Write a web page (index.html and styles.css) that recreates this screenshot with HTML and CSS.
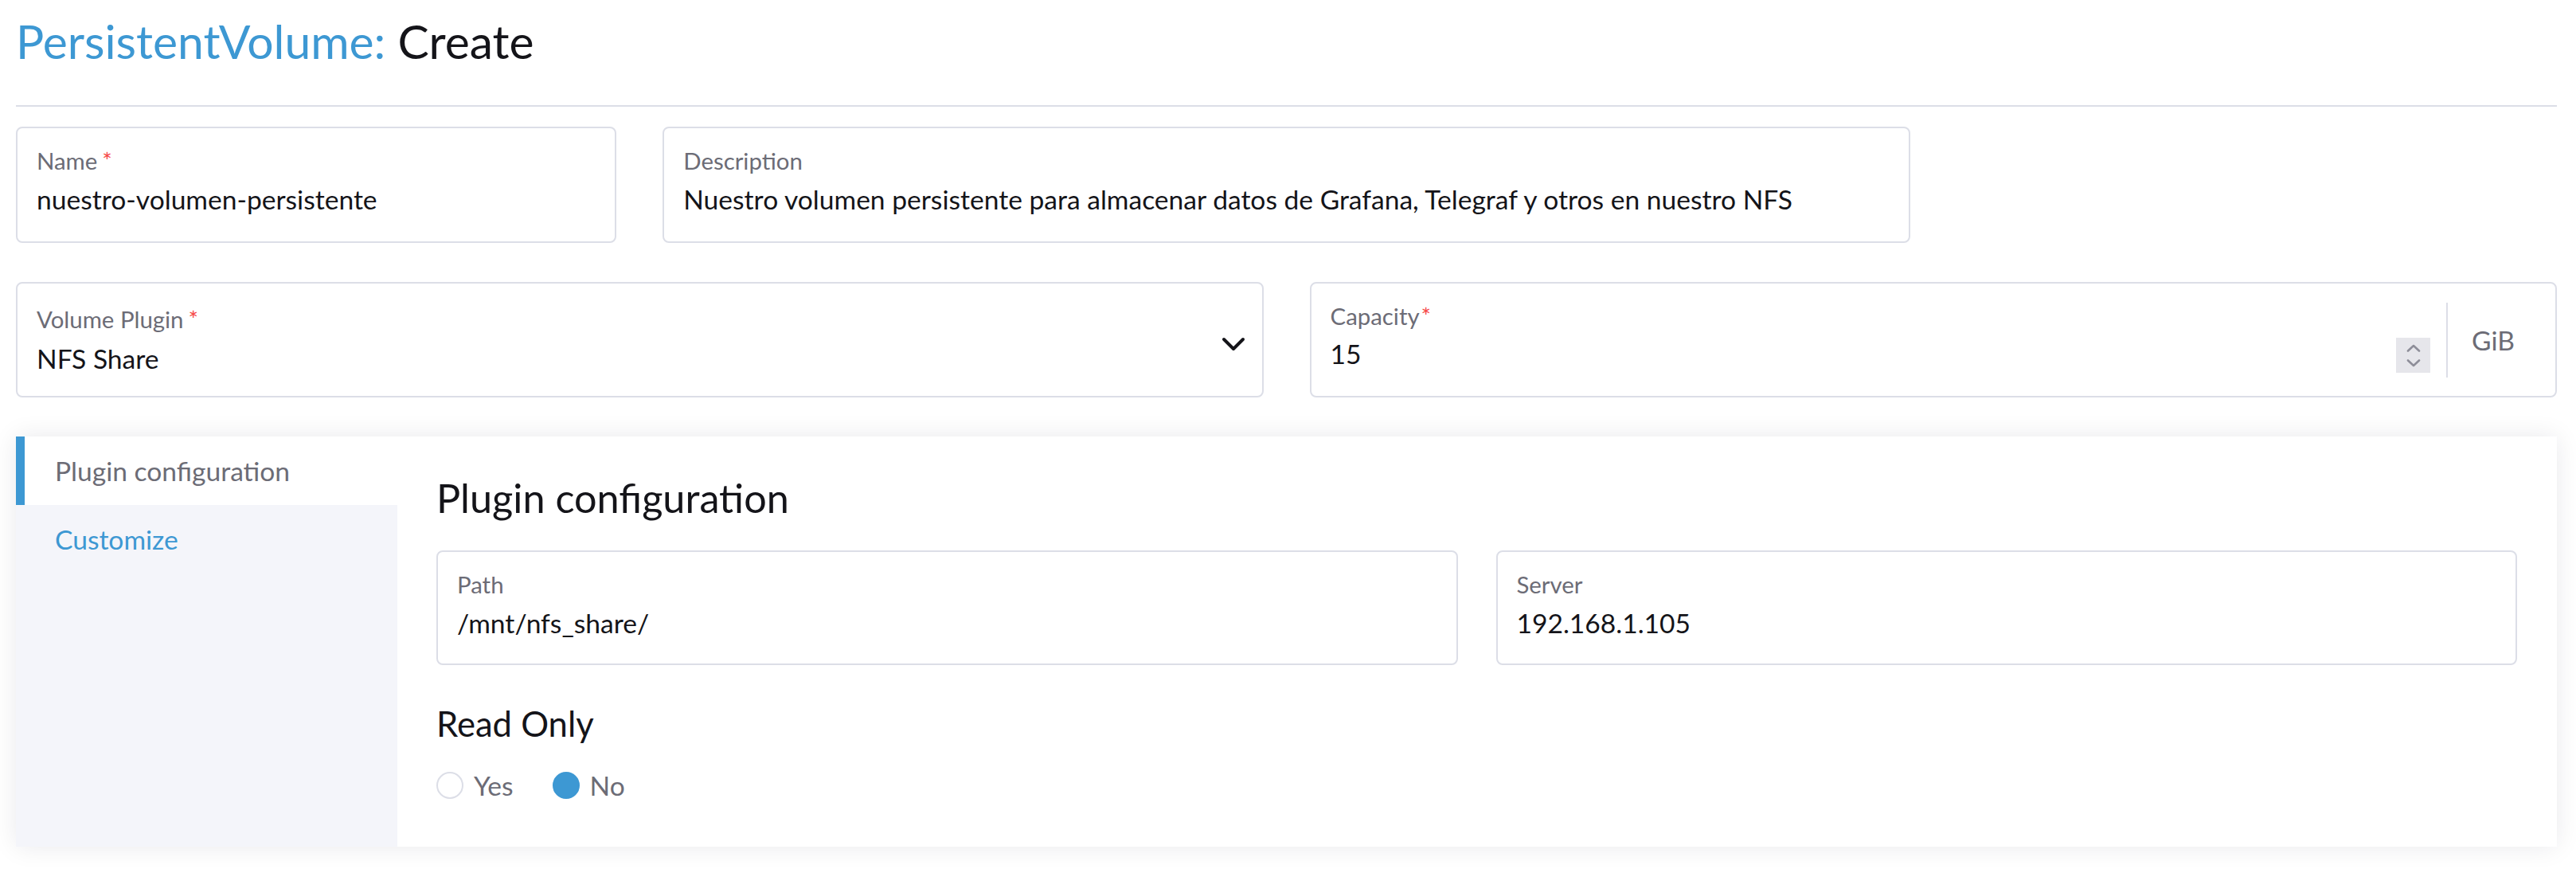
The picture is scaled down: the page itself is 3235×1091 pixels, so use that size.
FILE: index.html
```html
<!DOCTYPE html>
<html lang="en">
<head>
<meta charset="utf-8">
<title>PersistentVolume: Create</title>
<link rel="stylesheet" href="styles.css">
</head>
<body>
<div class="page">
  <header class="header">
    <h1 class="title"><span class="title-type">PersistentVolume:</span> Create</h1>
  </header>
  <hr class="divider">

  <div class="grid4 row">
    <div class="field span1">
      <div class="label">Name<span class="req">*</span></div>
      <div class="value">nuestro-volumen-persistente</div>
    </div>
    <div class="field span2">
      <div class="label">Description</div>
      <div class="value">Nuestro volumen persistente para almacenar datos de Grafana, Telegraf y otros en nuestro NFS</div>
    </div>
  </div>

  <div class="grid2 row">
    <div class="field select">
      <div class="field-main">
        <div class="label">Volume Plugin<span class="req">*</span></div>
        <div class="value">NFS Share</div>
      </div>
      <svg class="chevron" width="30" height="18" viewBox="0 0 30 18"><path d="M3 3 L15 15 L27 3" fill="none" stroke="#141419" stroke-width="4" stroke-linecap="round" stroke-linejoin="round"/></svg>
    </div>
    <div class="field capacity">
      <div class="field-main">
        <div class="label">Capacity<span class="req tight">*</span></div>
        <div class="value-row">
          <span class="value">15</span>
          <span class="spinner">
            <svg width="18" height="10" viewBox="0 0 18 10"><path d="M2 8.5 L9 2 L16 8.5" fill="none" stroke="#8e8e99" stroke-width="2.6" stroke-linecap="round" stroke-linejoin="round"/></svg>
            <svg width="18" height="10" viewBox="0 0 18 10"><path d="M2 1.5 L9 8 L16 1.5" fill="none" stroke="#8e8e99" stroke-width="2.6" stroke-linecap="round" stroke-linejoin="round"/></svg>
          </span>
        </div>
      </div>
      <div class="addon">GiB</div>
    </div>
  </div>

  <div class="panel">
    <nav class="side-tabs">
      <div class="tab active">Plugin configuration</div>
      <div class="tab">Customize</div>
    </nav>
    <section class="tab-content">
      <h2 class="section-title">Plugin configuration</h2>
      <div class="grid2 inner">
        <div class="field small">
          <div class="label">Path</div>
          <div class="value">/mnt/nfs_share/</div>
        </div>
        <div class="field small">
          <div class="label">Server</div>
          <div class="value">192.168.1.105</div>
        </div>
      </div>
      <h3 class="group-title">Read Only</h3>
      <div class="radios">
        <span class="radio"><span class="dot"></span>Yes</span>
        <span class="radio"><span class="dot checked"></span>No</span>
      </div>
    </section>
  </div>
</div>
</body>
</html>
```

FILE: styles.css
```css
* { box-sizing: border-box; }

html, body {
  margin: 0;
  padding: 0;
  background: #ffffff;
}

body {
  font-family: Lato, "Liberation Sans", sans-serif;
  color: #141419;
}

.page {
  padding: 18px 24px 0 20px;
}

.title {
  margin: 0;
  font-size: 58.8px;
  font-weight: 400;
  line-height: 67px;
  color: #141419;
}

.title-type {
  color: #3d98d3;
}

.divider {
  margin: 47px 0 25px;
  border: 0;
  border-top: 2px solid #dcdee7;
  height: 0;
}

.row {
  margin-bottom: 49px;
}

.grid4 {
  display: grid;
  grid-template-columns: repeat(4, 1fr);
  column-gap: 58px;
}

.grid2 {
  display: grid;
  grid-template-columns: 1fr 1fr;
  column-gap: 58px;
}

.span1 { grid-column: span 1; }
.span2 { grid-column: span 2; }

.field {
  height: 146px;
  border: 2px solid #dcdee7;
  border-radius: 8px;
  padding: 24px 24px 0 24px;
  background: #ffffff;
}

.label {
  font-size: 29.4px;
  line-height: 34px;
  color: #6c6c76;
  white-space: nowrap;
}

.req {
  color: #f64747;
  margin-left: 6px;
}

.req.tight {
  margin-left: 2px;
}

.value {
  margin-top: 11px;
  font-size: 33.6px;
  line-height: 40px;
  color: #141419;
  white-space: nowrap;
}

.select {
  display: flex;
  height: 145px;
  padding-top: 28px;
  padding-right: 21px;
}

.select .value {
  margin-top: 12px;
}

.field-main {
  flex: 1;
}

.chevron {
  flex: none;
  margin-top: 39px;
}

.capacity {
  display: flex;
  height: 145px;
  padding-right: 0;
}

.value-row {
  display: flex;
  justify-content: space-between;
  align-items: flex-start;
  margin-top: 10px;
}

.value-row .value {
  margin-top: 0;
}

.spinner {
  width: 43px;
  height: 44px;
  margin-right: 20px;
  background: #e6e6eb;
  display: flex;
  flex-direction: column;
  align-items: center;
  justify-content: center;
  gap: 9px;
}

.spinner svg {
  display: block;
}

.addon {
  flex: none;
  width: 137px;
  margin: 0 0 23px;
  border-left: 2px solid #dcdee7;
  padding-left: 30px;
  padding-top: 27px;
  font-size: 33.6px;
  line-height: 40px;
  color: #6c6c76;
}

.panel {
  display: flex;
  margin-bottom: 27px;
  background: #ffffff;
  box-shadow: 0 0 30px rgba(20, 20, 40, 0.09);
}

.side-tabs {
  flex: none;
  width: 479px;
  background: #f4f5fa;
}

.tab {
  height: 86px;
  line-height: 86px;
  padding-left: 49px;
  font-size: 33.6px;
  color: #3d98d3;
  white-space: nowrap;
}

.tab.active {
  background: #ffffff;
  color: #6c6c76;
  border-left: 11px solid #3d98d3;
  padding-left: 38px;
}

.tab-content {
  flex: 1;
  padding: 48px 50px 57px 49px;
}

.section-title {
  margin: 0;
  font-size: 50.4px;
  font-weight: 400;
  line-height: 58px;
  color: #141419;
}

.grid2.inner {
  margin-top: 37px;
  column-gap: 48px;
}

.field.small {
  height: 144px;
}

.group-title {
  margin: 49px 0 0;
  font-size: 43.6px;
  font-weight: 400;
  line-height: 48px;
  color: #141419;
}

.radios {
  display: flex;
  align-items: center;
  gap: 49px;
  height: 40px;
  margin-top: 34px;
}

.radio {
  display: flex;
  align-items: center;
  gap: 13px;
  font-size: 33.6px;
  line-height: 40px;
  color: #6c6c76;
}

.dot {
  display: inline-block;
  width: 34px;
  height: 34px;
  border-radius: 50%;
  border: 2px solid #dcdee7;
  background: #ffffff;
}

.dot.checked {
  border-color: #3d98d3;
  background: #3d98d3;
}
```
